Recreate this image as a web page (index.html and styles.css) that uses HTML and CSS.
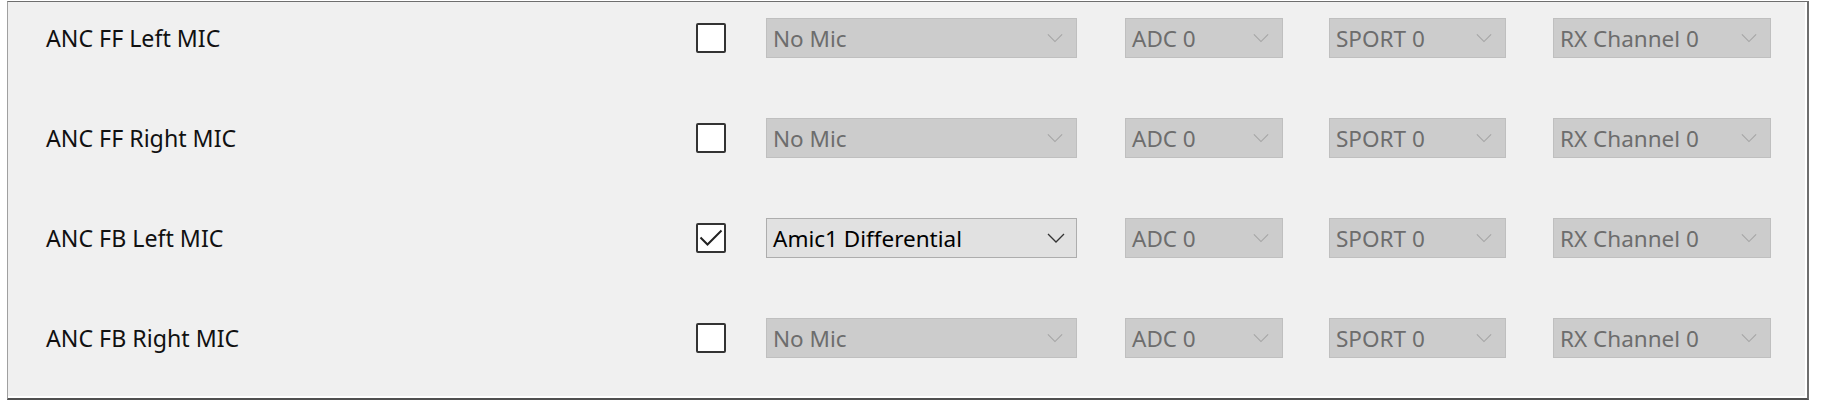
FILE: index.html
```html
<!DOCTYPE html>
<html>
<head>
<meta charset="utf-8">
<link rel="stylesheet" href="styles.css">
</head>
<body>
<div class="panel">
  <div class="grid">
    <div class="label">ANC FF Left MIC</div>
    <div class="check"></div>
    <div class="combo combo-mic disabled"><span>No Mic</span><svg class="chev" viewBox="0 0 18 10"><polyline points="1,1 9,9 17,1"/></svg></div>
    <div class="combo combo-adc disabled"><span>ADC 0</span><svg class="chev" viewBox="0 0 18 10"><polyline points="1,1 9,9 17,1"/></svg></div>
    <div class="combo combo-sport disabled"><span>SPORT 0</span><svg class="chev" viewBox="0 0 18 10"><polyline points="1,1 9,9 17,1"/></svg></div>
    <div class="combo combo-rx disabled"><span>RX Channel 0</span><svg class="chev" viewBox="0 0 18 10"><polyline points="1,1 9,9 17,1"/></svg></div>

    <div class="label">ANC FF Right MIC</div>
    <div class="check"></div>
    <div class="combo combo-mic disabled"><span>No Mic</span><svg class="chev" viewBox="0 0 18 10"><polyline points="1,1 9,9 17,1"/></svg></div>
    <div class="combo combo-adc disabled"><span>ADC 0</span><svg class="chev" viewBox="0 0 18 10"><polyline points="1,1 9,9 17,1"/></svg></div>
    <div class="combo combo-sport disabled"><span>SPORT 0</span><svg class="chev" viewBox="0 0 18 10"><polyline points="1,1 9,9 17,1"/></svg></div>
    <div class="combo combo-rx disabled"><span>RX Channel 0</span><svg class="chev" viewBox="0 0 18 10"><polyline points="1,1 9,9 17,1"/></svg></div>

    <div class="label">ANC FB Left MIC</div>
    <div class="check checked"><svg viewBox="0 0 26 26"><polyline points="2.5,12.5 9.5,19.5 23.5,5.5"/></svg></div>
    <div class="combo combo-mic"><span>Amic1 Differential</span><svg class="chev" viewBox="0 0 18 10"><polyline points="1,1 9,9 17,1"/></svg></div>
    <div class="combo combo-adc disabled"><span>ADC 0</span><svg class="chev" viewBox="0 0 18 10"><polyline points="1,1 9,9 17,1"/></svg></div>
    <div class="combo combo-sport disabled"><span>SPORT 0</span><svg class="chev" viewBox="0 0 18 10"><polyline points="1,1 9,9 17,1"/></svg></div>
    <div class="combo combo-rx disabled"><span>RX Channel 0</span><svg class="chev" viewBox="0 0 18 10"><polyline points="1,1 9,9 17,1"/></svg></div>

    <div class="label">ANC FB Right MIC</div>
    <div class="check"></div>
    <div class="combo combo-mic disabled"><span>No Mic</span><svg class="chev" viewBox="0 0 18 10"><polyline points="1,1 9,9 17,1"/></svg></div>
    <div class="combo combo-adc disabled"><span>ADC 0</span><svg class="chev" viewBox="0 0 18 10"><polyline points="1,1 9,9 17,1"/></svg></div>
    <div class="combo combo-sport disabled"><span>SPORT 0</span><svg class="chev" viewBox="0 0 18 10"><polyline points="1,1 9,9 17,1"/></svg></div>
    <div class="combo combo-rx disabled"><span>RX Channel 0</span><svg class="chev" viewBox="0 0 18 10"><polyline points="1,1 9,9 17,1"/></svg></div>
  </div>
</div>
</body>
</html>
```

FILE: styles.css
```css
html, body {
  margin: 0;
  padding: 0;
  background: #ffffff;
}

body {
  font-family: "Noto Sans", "Open Sans", sans-serif;
  font-size: 22.5px;
  color: #000;
}

.panel {
  margin: 1px 0 0 7px;
  width: 1802px;
  height: 399px;
  box-sizing: border-box;
  background: #f0f0f0;
  border-top: 1px solid #6e6e6e;
  border-left: 1px solid #a0a0a0;
  border-right: 2px solid #6e6e6e;
  border-bottom: 2px solid #505050;
  box-shadow: inset -2px -2px 0 #ffffff;
  padding: 16px 0 0 38px;
}

.grid {
  display: grid;
  grid-template-columns: 650px 70px 359px 204px 224px 218px;
  grid-auto-rows: 40px;
  row-gap: 60px;
  align-items: center;
}

.label {
  font-size: 23.2px;
  line-height: 40px;
  white-space: nowrap;
  color: #111111;
}

.check {
  width: 30px;
  height: 30px;
  box-sizing: border-box;
  border: 2px solid #333333;
  border-radius: 2px;
  background: #ffffff;
  display: flex;
  align-items: center;
  justify-content: center;
}

.check svg {
  width: 26px;
  height: 26px;
}

.check svg polyline {
  fill: none;
  stroke: #222222;
  stroke-width: 2;
}

.combo {
  height: 40px;
  box-sizing: border-box;
  border: 1px solid #adadad;
  background: #e1e1e1;
  display: flex;
  align-items: center;
  justify-content: space-between;
  padding: 0 11px 0 6px;
  white-space: nowrap;
  color: #000;
}

.combo.disabled {
  background: #cccccc;
  border-color: #bfbfbf;
  color: #6d6d6d;
  padding-right: 13px;
}

.combo-mic { width: 311px; }
.combo-adc { width: 158px; }
.combo-sport { width: 177px; }
.combo-rx { width: 218px; }

.chev {
  width: 18px;
  height: 10px;
  flex: none;
}

.chev polyline {
  fill: none;
  stroke: #333333;
  stroke-width: 1.3;
}

.disabled .chev {
  width: 16px;
}

.disabled .chev polyline {
  stroke: #a6a6a6;
}
```
